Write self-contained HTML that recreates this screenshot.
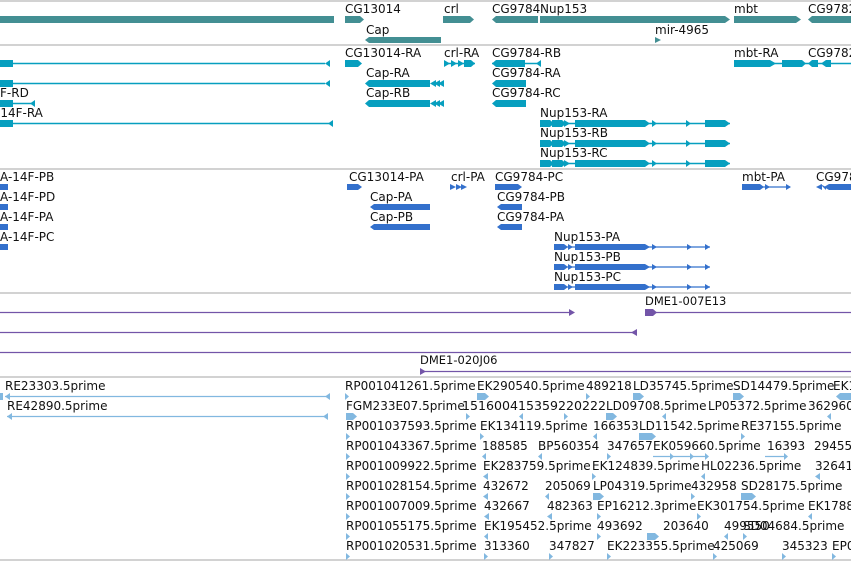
<!DOCTYPE html>
<html><head><meta charset="utf-8"><style>
html,body{margin:0;padding:0;background:#fff;width:851px;height:561px;overflow:hidden}
svg{display:block}
text{font-family:"DejaVu Sans","Liberation Sans",sans-serif;font-size:12px;fill:#111}
</style></head><body>
<svg width="851" height="561" viewBox="0 0 851 561">
<g stroke="#c4c4c4" stroke-width="1.5">
<line x1="0" y1="1" x2="851" y2="1"/><line x1="0" y1="45" x2="851" y2="45"/>
<line x1="0" y1="169" x2="851" y2="169"/><line x1="0" y1="293" x2="851" y2="293"/>
<line x1="0" y1="377" x2="851" y2="377"/><line x1="0" y1="560" x2="851" y2="560"/>
</g>
<g fill="#438f93">
<rect x="0" y="16" width="334" height="7"/>
<polygon points="345,16 360,16 364,19.5 360,23 345,23"/>
<polygon points="443,16 470,16 474,19.5 470,23 443,23"/>
<polygon points="496,16 538,16 538,23 496,23 492,19.5"/>
<polygon points="540,16 725,16 730,19.5 725,23 540,23"/>
<polygon points="734,16 796,16 801,19.5 796,23 734,23"/>
<polygon points="812,16 851,16 851,23 812,23 808,19.5"/>
<polygon points="369,37 441,37 441,43 369,43 365,40"/>
<polygon points="655,37 661,40 655,43"/>
</g>
<text x="345" y="13">CG13014</text><text x="444" y="13">crl</text><text x="492" y="13">CG9784</text><text x="540" y="13">Nup153</text><text x="734" y="13">mbt</text><text x="808" y="13">CG9782</text>
<text x="366" y="34">Cap</text><text x="655" y="34">mir-4965</text>
<g fill="#079fbf" stroke="#079fbf">
<g stroke-width="1.5">
<line x1="0" y1="63.5" x2="325" y2="63.5"/><line x1="0" y1="83.5" x2="325" y2="83.5"/>
<line x1="0" y1="103.5" x2="35" y2="103.5"/><line x1="0" y1="123.5" x2="333" y2="123.5"/>
<line x1="492" y1="63.5" x2="541" y2="63.5"/>
<line x1="770" y1="63.5" x2="851" y2="63.5"/>
<line x1="540" y1="123.5" x2="730" y2="123.5"/><line x1="540" y1="143.5" x2="730" y2="143.5"/><line x1="540" y1="163.5" x2="730" y2="163.5"/>
<line x1="444" y1="63.5" x2="475" y2="63.5"/>
</g>
<g stroke="none">
<rect x="0" y="60" width="13" height="7"/><rect x="0" y="80" width="13" height="7"/><rect x="0" y="100" width="13" height="7"/><rect x="0" y="120" width="13" height="7"/>
<polygon points="325,63.5 330,60 330,67"/><polygon points="325,83.5 330,80 330,87"/><polygon points="30,103.5 35,100 35,107"/><polygon points="328,123.5 333,120 333,127"/>
<polygon points="345,60 358,60 362,63.5 358,67 345,67"/>
<polygon points="444,60 450,63.5 444,67"/><polygon points="451,60 457,63.5 451,67"/><polygon points="458,60 464,63.5 458,67"/><polygon points="464,60 471,60 475,63.5 471,67 464,67"/>
<polygon points="496,60 525,60 525,67 496,67 492,63.5"/><polygon points="536,63.5 541,60 541,67"/>
<polygon points="496,80 526,80 526,87 496,87 492,83.5"/><polygon points="496,100 526,100 526,107 496,107 492,103.5"/>
<rect x="734" y="60" width="36" height="7"/><polygon points="770,60 776,63.5 770,67"/><rect x="782" y="60" width="20" height="7"/><polygon points="802,60 806,63.5 802,67"/>
<polygon points="812,60 818,60 818,67 812,67 808,63.5"/><polygon points="821,63.5 826,60 831,60 831,67 826,67"/>
</g>
</g>
<g fill="#079fbf">
<polygon points="369,80 430,80 430,87 369,87 365,83.5"/><polygon points="430,83.5 436,80 436,87"/><polygon points="434,83.5 440,80 440,87"/><polygon points="438,83.5 444,80 444,87"/>
<polygon points="369,100 430,100 430,107 369,107 365,103.5"/><polygon points="430,103.5 436,100 436,107"/><polygon points="434,103.5 440,100 440,107"/><polygon points="438,103.5 444,100 444,107"/>
</g>
<g id="nup" fill="#079fbf">
<polygon points="540,120 550,120 554,123.5 550,127 540,127"/><polygon points="552,120 562,120 566,123.5 562,127 552,127"/><polygon points="564,120 570,123.5 564,127"/>
<rect x="575" y="120" width="70" height="7"/><polygon points="645,120 650,123.5 645,127"/><polygon points="652,120 657,123.5 652,127"/><polygon points="686,120 691,123.5 686,127"/><polygon points="705,120 725,120 730,123.5 725,127 705,127"/>
</g>
<use href="#nup" y="20"/><use href="#nup" y="40"/>
<text x="345" y="57">CG13014-RA</text><text x="444" y="57">crl-RA</text><text x="492" y="57">CG9784-RB</text><text x="734" y="57">mbt-RA</text><text x="808" y="57">CG9782</text>
<text x="366" y="77">Cap-RA</text><text x="492" y="77">CG9784-RA</text>
<text x="0" y="97">F-RD</text><text x="366" y="97">Cap-RB</text><text x="492" y="97">CG9784-RC</text>
<text x="-4" y="117">-14F-RA</text><text x="540" y="117">Nup153-RA</text>
<text x="540" y="137">Nup153-RB</text><text x="540" y="157">Nup153-RC</text>
<g fill="#3370cc">
<rect x="0" y="184" width="8" height="6"/><rect x="0" y="204" width="8" height="6"/><rect x="0" y="224" width="8" height="6"/><rect x="0" y="244" width="8" height="6"/>
<polygon points="347,184 358,184 362,187 358,190 347,190"/>
<polygon points="450,184 456,187 450,190"/><polygon points="456,184 462,187 456,190"/><polygon points="461,184 467,187 461,190"/>
<polygon points="495,184 518,184 522,187 518,190 495,190"/>
<polygon points="374,204 430,204 430,210 374,210 370,207"/><polygon points="501,204 522,204 522,210 501,210 497,207"/>
<polygon points="374,224 430,224 430,230 374,230 370,227"/><polygon points="501,224 522,224 522,230 501,230 497,227"/>
<polygon points="742,184 760,184 764,187 760,190 742,190"/><polygon points="765,184 770,187 765,190"/><polygon points="786,184 791,187 786,190"/>
<polygon points="820,184 826,187 826,190"/><polygon points="816,187 822,184 822,190"/><polygon points="824,187 829,184 851,184 851,190 829,190"/>
</g>
<g stroke="#3370cc" stroke-width="1.3"><line x1="742" y1="187" x2="790" y2="187"/></g>
<g id="np" fill="#3370cc">
<line x1="554" y1="247" x2="710" y2="247" stroke="#3370cc" stroke-width="1.3"/>
<polygon points="554,244 564,244 568,247 564,250 554,250"/><polygon points="568,244 573,247 568,250"/>
<polygon points="575,244 645,244 650,247 645,250 575,250"/><polygon points="652,244 657,247 652,250"/><polygon points="687,244 692,247 687,250"/><polygon points="705,244 710,247 705,250"/>
</g>
<use href="#np" y="20"/><use href="#np" y="40"/>
<text x="0" y="181">A-14F-PB</text><text x="349" y="181">CG13014-PA</text><text x="451" y="181">crl-PA</text><text x="495" y="181">CG9784-PC</text><text x="742" y="181">mbt-PA</text><text x="816" y="181">CG978</text>
<text x="0" y="201">A-14F-PD</text><text x="370" y="201">Cap-PA</text><text x="497" y="201">CG9784-PB</text>
<text x="0" y="221">A-14F-PA</text><text x="370" y="221">Cap-PB</text><text x="497" y="221">CG9784-PA</text>
<text x="0" y="241">A-14F-PC</text><text x="554" y="241">Nup153-PA</text>
<text x="554" y="261">Nup153-PB</text><text x="554" y="281">Nup153-PC</text>
<g stroke="#7355a8" stroke-width="1.3">
<line x1="0" y1="312.5" x2="572" y2="312.5"/><line x1="655" y1="312.5" x2="851" y2="312.5"/>
<line x1="0" y1="332.5" x2="637" y2="332.5"/><line x1="0" y1="352.5" x2="851" y2="352.5"/><line x1="420" y1="371.5" x2="851" y2="371.5"/>
</g>
<g fill="#7355a8">
<polygon points="569,309 575,312.5 569,316"/><rect x="645" y="309" width="8" height="7"/><polygon points="653,309 657,312.5 653,316"/>
<polygon points="631,332.5 637,329 637,336"/><polygon points="420,368 426,371.5 420,375"/>
</g>
<text x="645" y="305" style="font-size:11.5px">DME1-007E13</text><text x="420" y="364" style="font-size:11.5px">DME1-020J06</text>
<g stroke="#82b8e0" stroke-width="1.3"><line x1="5" y1="396.5" x2="330" y2="396.5"/><line x1="7" y1="416.5" x2="328" y2="416.5"/>
<line x1="653" y1="456.5" x2="705" y2="456.5"/><line x1="765" y1="456.5" x2="786" y2="456.5"/></g>
<g fill="#82b8e0">
<polygon points="5,396.5 10,393 10,400"/><polygon points="330,393 330,400 325,396.5"/><polygon points="7,416.5 12,413 12,420"/><polygon points="328,413 328,420 323,416.5"/>
<polygon points="0,393 3,393 3,400 0,400"/>
<polygon points="345,393 349,396.5 345,400"/><polygon points="477,393 485,393 489,396.5 485,400 477,400"/><polygon points="586,393 590,396.5 586,400"/><polygon points="633,393 640,393 644,396.5 640,400 633,400"/><polygon points="733,393 740,393 744,396.5 740,400 733,400"/><polygon points="840,393 851,393 851,400 840,400 836,396.5"/>
<polygon points="346,413 353,413 357,416.5 353,420 346,420"/><polygon points="466,413 470,416.5 466,420"/><polygon points="519,416.5 523,413 523,420"/><polygon points="564,413 568,416.5 564,420"/><polygon points="606,413 613,413 617,416.5 613,420 606,420"/><polygon points="662,416.5 666,413 666,420"/><polygon points="827,416.5 831,413 831,420"/>
<polygon points="346,433 350,436.5 346,440"/><polygon points="480,433 484,436.5 480,440"/><polygon points="593,436.5 597,433 597,440"/><polygon points="639,433 652,433 656,436.5 652,440 639,440"/><polygon points="741,433 745,436.5 741,440"/>
<polygon points="346,453 350,456.5 346,460"/><polygon points="482,456.5 486,453 486,460"/><polygon points="538,456.5 542,453 542,460"/><polygon points="607,453 611,456.5 607,460"/><polygon points="670,453 674,456.5 670,460"/><polygon points="690,453 694,456.5 690,460"/><polygon points="705,453 709,456.5 705,460"/><polygon points="784,453 788,456.5 784,460"/>
<polygon points="346,473 350,476.5 346,480"/><polygon points="483,476.5 488,473 488,480"/><polygon points="592,473 596,476.5 592,480"/><polygon points="701,476.5 705,473 705,480"/><polygon points="815,476.5 820,473 820,480"/>
<polygon points="346,493 350,496.5 346,500"/><polygon points="483,496.5 488,493 488,500"/><polygon points="545,496.5 549,493 549,500"/><polygon points="593,493 600,493 604,496.5 600,500 593,500"/><polygon points="691,493 695,496.5 691,500"/><polygon points="741,493 752,493 756,496.5 752,500 741,500"/>
<polygon points="346,513 350,516.5 346,520"/><polygon points="484,516.5 489,513 489,520"/><polygon points="547,516.5 552,513 552,520"/><polygon points="597,513 601,516.5 597,520"/><polygon points="697,513 701,516.5 697,520"/><polygon points="808,516.5 812,513 812,520"/>
<polygon points="346,533 350,536.5 346,540"/><polygon points="484,536.5 488,533 488,540"/><polygon points="597,533 601,536.5 597,540"/><polygon points="647,533 655,533 659,536.5 655,540 647,540"/><polygon points="724,536.5 728,533 728,540"/><polygon points="743,533 747,536.5 743,540"/>
<polygon points="346,553 350,556.5 346,560"/><polygon points="484,553 488,556.5 484,560"/><polygon points="549,553 553,556.5 549,560"/><polygon points="607,553 611,556.5 607,560"/><polygon points="713,553 717,556.5 713,560"/><polygon points="782,553 786,556.5 782,560"/><polygon points="832,553 836,556.5 832,560"/>
</g>
<g style="font-size:11.6px">
<text x="5" y="390">RE23303.5prime</text><text x="7" y="410">RE42890.5prime</text>
<text x="345" y="390">RP001041261.5prime</text><text x="477" y="390">EK290540.5prime</text><text x="586" y="390">489218</text><text x="633" y="390">LD35745.5prime</text><text x="733" y="390">SD14479.5prime</text><text x="833" y="390">EK1</text>
<text x="346" y="410">FGM233E07.5prime</text><text x="462" y="410" textLength="144" lengthAdjust="spacingAndGlyphs">151600415359220222</text><text x="606" y="410">LD09708.5prime</text><text x="708" y="410">LP05372.5prime</text><text x="808" y="410">362960</text>
<text x="346" y="430">RP001037593.5prime</text><text x="480" y="430">EK134119.5prime</text><text x="593" y="430">166353</text><text x="639" y="430">LD11542.5prime</text><text x="741" y="430">RE37155.5prime</text>
<text x="346" y="450">RP001043367.5prime</text><text x="482" y="450">188585</text><text x="538" y="450">BP560354</text><text x="607" y="450">347657</text><text x="653" y="450">EK059660.5prime</text><text x="767" y="450">16393</text><text x="814" y="450">29455</text>
<text x="346" y="470">RP001009922.5prime</text><text x="483" y="470">EK283759.5prime</text><text x="592" y="470">EK124839.5prime</text><text x="701" y="470">HL02236.5prime</text><text x="815" y="470">32641</text>
<text x="346" y="490">RP001028154.5prime</text><text x="483" y="490">432672</text><text x="545" y="490">205069</text><text x="593" y="490">LP04319.5prime</text><text x="691" y="490">432958</text><text x="741" y="490">SD28175.5prime</text>
<text x="346" y="510">RP001007009.5prime</text><text x="484" y="510">432667</text><text x="547" y="510">482363</text><text x="597" y="510">EP16212.3prime</text><text x="697" y="510">EK301754.5prime</text><text x="808" y="510">EK1788</text>
<text x="346" y="530">RP001055175.5prime</text><text x="484" y="530">EK195452.5prime</text><text x="597" y="530">493692</text><text x="663" y="530">203640</text><text x="724" y="530">499550</text><text x="743" y="530">SD04684.5prime</text>
<text x="346" y="550">RP001020531.5prime</text><text x="484" y="550">313360</text><text x="549" y="550">347827</text><text x="607" y="550">EK223355.5prime</text><text x="713" y="550">425069</text><text x="782" y="550">345323</text><text x="832" y="550">EP0</text>
</g>
</svg>
</body></html>
